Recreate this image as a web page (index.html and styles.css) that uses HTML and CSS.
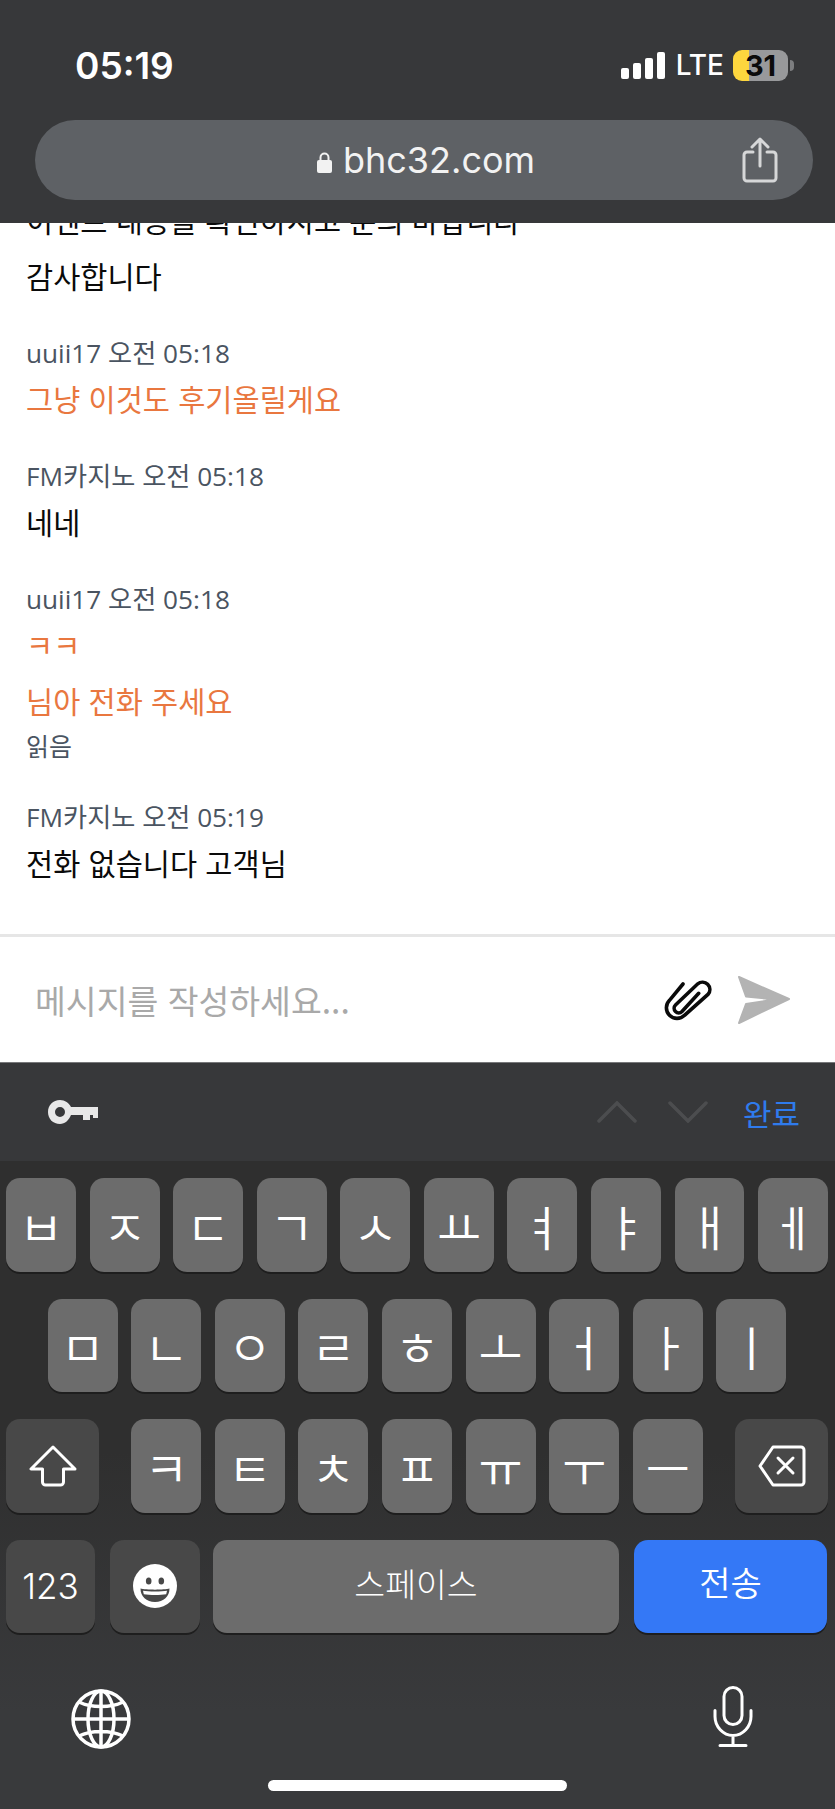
FILE: index.html
```html
<!DOCTYPE html>
<html lang="ko">
<head>
    <meta charset="UTF-8">
    <meta name="viewport" content="width=device-width, initial-scale=1.0">
    <title>bhc32.com</title>
    <link rel="stylesheet" href="styles.css">
</head>
<body>

<div class="screen">
    <header class="browser-bar">
        <div class="status">
            <div class="time">05:19</div>
            <div class="status-right">
                <div class="signal"><i class="b1"></i><i class="b2"></i><i class="b3"></i><i class="b4"></i></div>
                <div class="lte">LTE</div>
                <div class="battery"><span class="level">31</span></div>
                <div class="nub"></div>
            </div>
        </div>
        <div class="url-pill">
            <div class="url">
                <svg class="lock" viewBox="0 0 15 22"><path d="M3.500 10V6.500a4 4 0 0 1 8 0V10" fill="none" stroke="#f2f2f2" stroke-width="2"/><rect x="0" y="9" width="15" height="13" rx="2" fill="#f2f2f2"/></svg>
                <span>bhc32.com</span>
            </div>
            <svg class="share" viewBox="0 0 36 46" fill="none" stroke="#d6d7d8" stroke-width="3" stroke-linecap="round" stroke-linejoin="round"><path d="M11 15H5a3 3 0 0 0-3 3v23a3 3 0 0 0 3 3h26a3 3 0 0 0 3-3V18a3 3 0 0 0-3-3h-6"/><path d="M18 29V3M10 10l8-8 8 8"/></svg>
        </div>
    </header>

    <main class="chat">
        <p class="msg cut">이벤트 내용을 확인하시고 문의 바랍니다</p>
        <p class="msg">감사합니다</p>

        <div class="meta">uuii17 오전 05:18</div>
        <p class="msg mine">그냥 이것도 후기올릴게요</p>

        <div class="meta">FM카지노 오전 05:18</div>
        <p class="msg">네네</p>

        <div class="meta">uuii17 오전 05:18</div>
        <p class="msg mine run">ㅋㅋ</p>
        <p class="msg mine with-read">님아 전화 주세요</p>
        <div class="read">읽음</div>

        <div class="meta">FM카지노 오전 05:19</div>
        <p class="msg last">전화 없습니다 고객님</p>
    </main>

    <div class="composer">
        <div class="placeholder">메시지를 작성하세요...</div>
        <svg class="clip" viewBox="16 13 50 44" fill="none" stroke="#0a0a0a" stroke-width="3.600" stroke-linecap="round"><path d="M35 19 21.500 35.300A10.600 10.600 0 0 0 36.500 50.300L60.200 29.200A7.400 7.400 0 0 0 49.800 18.800L27.500 40A4.500 4.500 0 0 0 34 46.500L50.700 28.300"/></svg>
        <svg class="send" viewBox="0 0 54 48"><path d="M2 1 52 23 2 47 9 28 38 23.500 9 20.500z" fill="#b3b3b3" stroke="#b3b3b3" stroke-width="2" stroke-linejoin="round"/></svg>
    </div>

    <div class="kb-toolbar">
        <svg class="key-icon" viewBox="0 0 50 24"><path fill-rule="evenodd" fill="#e8e8e8" d="M12 0c5 0 9 3 11 7h27v11h-5v-3h-3v5h-7v-5H23c-2 5-6 9-11 9C5 24 0 19 0 12S5 0 12 0zm0 7a5 5 0 1 0 0 10 5 5 0 0 0 0-10z"/></svg>
        <div class="arrows">
            <svg class="chev" viewBox="0 0 40 22"><path d="M2 20 20 2l18 18" fill="none" stroke="#4c4d4f" stroke-width="3.500" stroke-linecap="round"/></svg>
            <svg class="chev" viewBox="0 0 40 22"><path d="M2 2l18 18L38 2" fill="none" stroke="#4c4d4f" stroke-width="3.500" stroke-linecap="round"/></svg>
        </div>
        <div class="done">완료</div>
    </div>

    <div class="keyboard">
        <div class="kb-row">
            <div class="key">ㅂ</div><div class="key">ㅈ</div><div class="key">ㄷ</div><div class="key">ㄱ</div><div class="key">ㅅ</div>
            <div class="key">ㅛ</div><div class="key">ㅕ</div><div class="key">ㅑ</div><div class="key">ㅐ</div><div class="key">ㅔ</div>
        </div>
        <div class="kb-row center">
            <div class="key">ㅁ</div><div class="key">ㄴ</div><div class="key">ㅇ</div><div class="key">ㄹ</div><div class="key">ㅎ</div>
            <div class="key">ㅗ</div><div class="key">ㅓ</div><div class="key">ㅏ</div><div class="key">ㅣ</div>
        </div>
        <div class="kb-row spread">
            <div class="key dark wide">
                <svg class="shift" viewBox="0 0 48 42" fill="none" stroke="#fff" stroke-width="3" stroke-linejoin="round"><path d="M24 2 2 24h11.500v13a3 3 0 0 0 3 3h15a3 3 0 0 0 3-3V24H46z"/></svg>
            </div>
            <div class="letters">
                <div class="key">ㅋ</div><div class="key">ㅌ</div><div class="key">ㅊ</div><div class="key">ㅍ</div><div class="key">ㅠ</div><div class="key">ㅜ</div><div class="key">ㅡ</div>
            </div>
            <div class="key dark wide">
                <svg class="backspace" viewBox="0 0 48 42" fill="none" stroke="#fff" stroke-width="3" stroke-linecap="round" stroke-linejoin="round"><path d="M15 2h28a3 3 0 0 1 3 3v32a3 3 0 0 1-3 3H15L2 21z"/><path d="M20 13l15 15M35 13 20 28"/></svg>
            </div>
        </div>
        <div class="kb-row bottom">
            <div class="key dark num">123</div>
            <div class="key dark emoji">
                <svg class="face" viewBox="0 0 44 44"><circle cx="22" cy="22" r="22" fill="#fff"/><ellipse cx="15.700" cy="17" rx="2.800" ry="3.500" fill="#484848"/><ellipse cx="28.300" cy="17" rx="2.800" ry="3.500" fill="#484848"/><path d="M7.500 24.500c5 1.500 24 1.500 29 0 0 8-6 13.500-14.500 13.500S7.500 32.500 7.500 24.500z" fill="#484848"/><path d="M10 26.800c5 1 19 1 24 0l-.8 3.500c-5.500 1-16.900 1-22.400 0z" fill="#fff"/></svg>
            </div>
            <div class="key space">스페이스</div>
            <div class="key send-key">전송</div>
        </div>
        <div class="kb-system">
            <svg class="globe" viewBox="0 0 60 60" fill="none" stroke="#fff" stroke-width="3.500"><circle cx="30" cy="30" r="28"/><ellipse cx="30" cy="30" rx="13" ry="28"/><path d="M30 2v56M2 30h56M8 13c12 6 32 6 44 0M8 47c12-6 32-6 44 0"/></svg>
            <svg class="mic" viewBox="22 15 42 64" fill="none" stroke="#fff" stroke-width="3" stroke-linecap="round"><rect x="34" y="18.500" width="18" height="37" rx="9"/><path d="M25 41.500v6c0 10 8 19 18 19s18-9 18-19v-6M43 66.500v10M30 76.500h26"/></svg>
        </div>
        <div class="home-bar"></div>
    </div>
</div>

</body>
</html>
```

FILE: styles.css
```css
* { box-sizing: border-box; }
html, body { margin: 0; padding: 0; }
body { font-family: "Open Sans", "Noto Sans CJK KR", sans-serif; background: #fff; }
.screen { width: 835px; height: 1809px; display: flex; flex-direction: column; overflow: hidden; }

.browser-bar { height: 223px; flex: none; background: #37383a; padding: 0 22px 0 35px; position: relative; z-index: 1; }
.status { height: 120px; display: flex; justify-content: space-between; align-items: center; padding: 10px 19px 0 40px; }
.time { font-family: Inter, sans-serif; font-size: 37px; font-weight: 600; color: #fff; }
.status-right { display: flex; align-items: center; }
.signal { display: flex; align-items: flex-end; gap: 4px; height: 27px; margin-right: 11px; }
.signal i { width: 8px; background: #fff; border-radius: 2px; display: block; }
.b1 { height: 11px; } .b2 { height: 16px; } .b3 { height: 21px; } .b4 { height: 27px; }
.lte { font-family: Inter, sans-serif; font-size: 28px; font-weight: 500; color: #fff; margin-right: 9px; }
.battery { width: 55px; height: 31px; border-radius: 9px; background: linear-gradient(90deg, #fdd63e 16px, #98999b 16px); text-align: center; }
.level { font-family: Inter, sans-serif; font-size: 29px; font-weight: 700; line-height: 31px; color: #0b0b0b; display: block; }
.nub { width: 4px; height: 11px; margin-left: 2px; background: #7d7e80; border-radius: 0 4px 4px 0; }

.url-pill { height: 80px; width: 778px; border-radius: 40px; background: #5e6165; display: flex; align-items: center; justify-content: center; position: relative; }
.url { display: flex; align-items: center; gap: 11px; margin-left: 4px; font-family: Inter, sans-serif; font-size: 36px; color: #f2f2f2; }
.lock { width: 15px; height: 22px; margin-top: 4px; }
.share { width: 36px; height: 46px; position: absolute; right: 35px; top: 17px; }

/* newest messages stay on the composer, older ones run under the browser bar */
.chat { flex: 1; min-height: 0; background: #fff; display: flex; flex-direction: column; justify-content: flex-end; overflow: hidden; padding: 0 26px; }
.msg { margin: 0 0 39px; font-family: "Noto Sans CJK KR", sans-serif; font-size: 29.500px; line-height: 42px; color: #0a0a0a; flex: none; }
.msg.cut { margin-bottom: 14px; }
.msg.mine { color: #e9773f; }
.msg.run { margin-bottom: 14px; }
.msg.with-read { margin-bottom: 6px; }
.msg.last { margin-bottom: 51px; }
.meta { font-size: 26.200px; line-height: 36px; color: #4a5461; margin-bottom: 6px; flex: none; }
.read { font-family: "Noto Sans CJK KR", sans-serif; font-size: 25px; line-height: 36px; color: #4a5461; margin-bottom: 36px; flex: none; }

.composer { height: 128px; flex: none; background: #fff; border-top: 3px solid #e6e6e6; display: flex; align-items: center; padding: 0 44px 0 35px; }
.placeholder { flex: 1; font-family: "Noto Sans CJK KR", sans-serif; font-size: 33.500px; color: #a9a9a9; }
.clip { width: 50px; height: 44px; margin-right: 23px; }
.send { width: 54px; height: 48px; }

.kb-toolbar { height: 99px; flex: none; background: #37383a; border-top: 1px solid #77787a; display: flex; align-items: center; padding: 0 35px 0 48px; }
.key-icon { width: 50px; height: 24px; }
.arrows { margin-left: auto; display: flex; gap: 31px; margin-right: 35px; }
.chev { width: 40px; height: 22px; }
.done { font-family: "Noto Sans CJK KR", sans-serif; font-size: 31px; color: #2f7bec; }

.keyboard { height: 648px; flex: none; background: linear-gradient(180deg, #2f2f2f 0%, #2f2f2f 45%, #393a3c 85%); padding: 17px 7px 0 6px; position: relative; }
.kb-row { display: flex; gap: 13.600px; margin-bottom: 27px; }
.kb-row.center { justify-content: center; }
.kb-row.spread { justify-content: space-between; gap: 0; }
.letters { display: flex; gap: 13.600px; }
.key { width: 70px; height: 93.500px; border-radius: 14px; background: #6c6c6c; box-shadow: 0 2px 0 #1e1e1e; color: #fff; font-family: "Noto Sans CJK KR", sans-serif; font-size: 48px; font-weight: 350; display: flex; align-items: center; justify-content: center; }
.key.dark { background: #484848; }
.key.wide { width: 93px; }
.kb-row.bottom { gap: 0; margin-bottom: 0; }
.key.num { width: 89px; font-family: Inter, sans-serif; font-size: 35px; font-weight: 300; margin-right: 15px; }
.key.emoji { width: 90px; margin-right: 13px; }
.face { width: 44px; height: 44px; }
.key.space { width: 406px; font-size: 33.500px; font-weight: 300; margin-right: 15px; padding-bottom: 8px; }
.key.send-key { width: 193px; background: #3478f6; font-size: 34px; padding-bottom: 10px; }
.shift, .backspace { width: 48px; height: 42px; }

.kb-system { display: flex; justify-content: space-between; align-items: flex-end; padding: 0 74px 0 65px; height: 116px; }
.globe { width: 60px; height: 60px; }
.mic { width: 42px; height: 64px; margin-bottom: 1px; }
.home-bar { position: absolute; left: 268px; bottom: 18px; width: 299px; height: 11px; border-radius: 6px; background: #fff; }
```
